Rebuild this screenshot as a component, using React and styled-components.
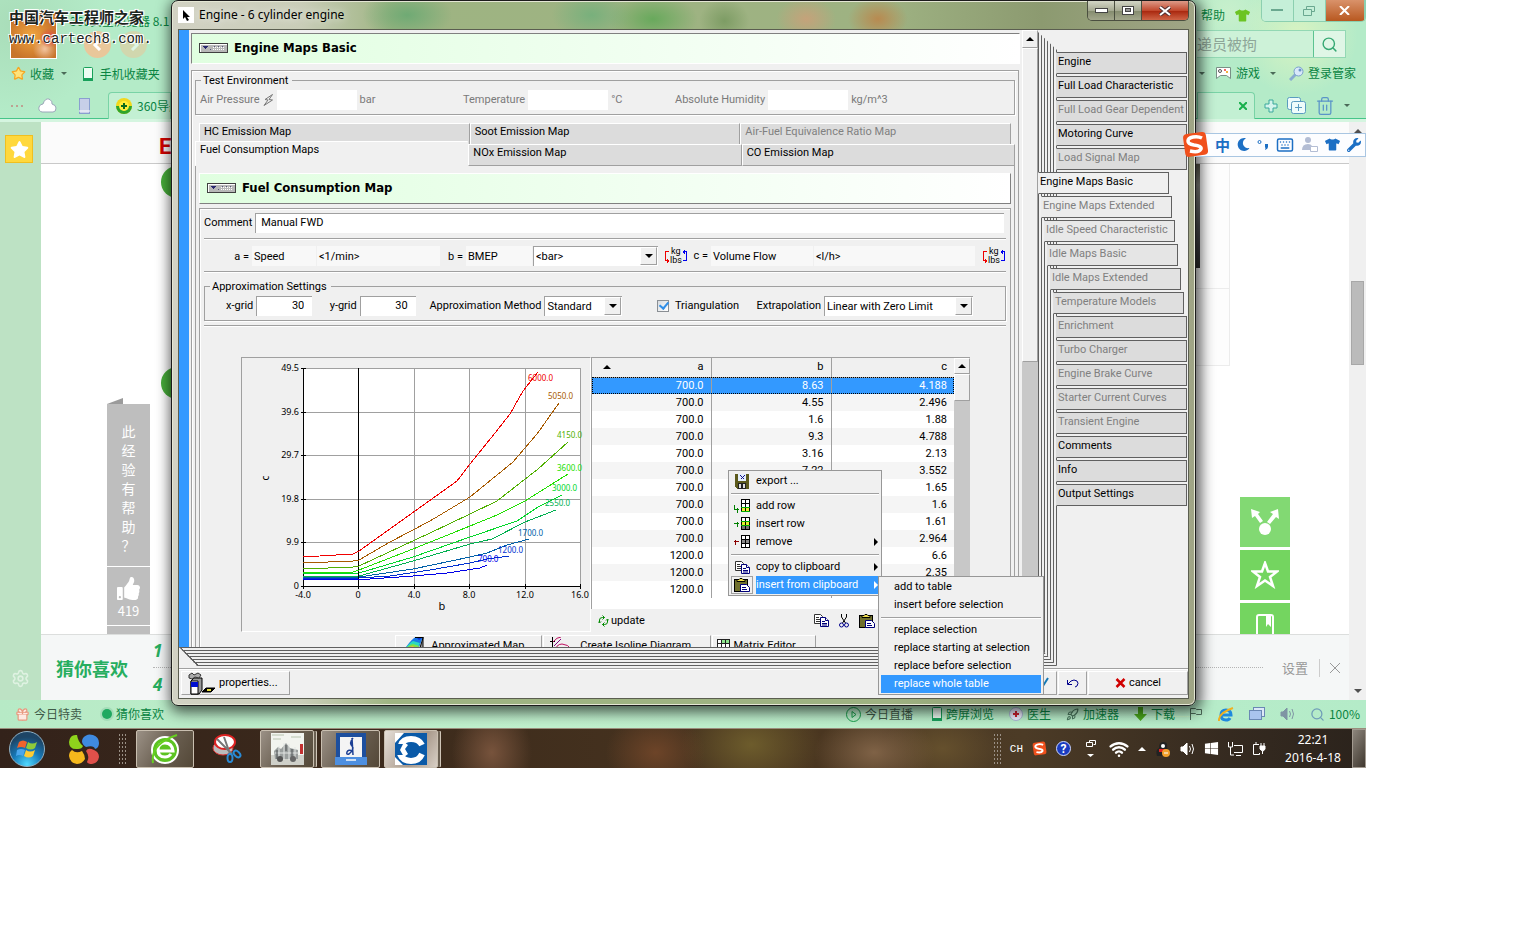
// libraries
import React from "react";
import styled, { createGlobalStyle, css } from "styled-components";
// icons
import { FaStar, FaWrench, FaTshirt, FaThumbsUp, FaWindows, FaMoon } from "react-icons/fa";
import { Wifi, Trash2, Settings, Search, Star, Rocket, Gift, Keyboard } from "lucide-react";

const GlobalStyle = createGlobalStyle`
  * {
    box-sizing: border-box;
  }

  body {
    margin: 0;
    background: #fff;
    font-family: Roboto, "Noto Sans CJK SC", sans-serif;
    font-size: 11px;
    line-height: 14px;
    color: #000;
  }

  button, input, select {
    font: inherit;
    color: inherit;
    margin: 0;
    padding: 0;
    border: 0;
    border-radius: 0;
    background: none;
  }

  a {
    color: inherit;
    text-decoration: none;
  }
`;

const cjk = css`
  font-family: "Noto Sans CJK SC", sans-serif;
  font-size: 12px;
  line-height: 16px;
`;

const raised = css`
  border: 1px solid;
  border-color: #fff #a0a0a0 #a0a0a0 #fff;
  background: #f0f0f0;
`;

/* ---------- desktop ---------- */

const Desktop = styled.main`
  position: relative;
  display: flex;
  flex-direction: column;
  max-width: 1366px;
  min-height: 768px;
  overflow: hidden;
`;

const Row = styled.div`
  display: flex;
  align-items: center;
  gap: ${(p) => p.$gap || 0}px;
  height: ${(p) => (p.$height ? `${p.$height}px` : "auto")};
  padding: ${(p) => p.$pad || 0};
`;

/* ---------- browser behind the window ---------- */

const BrowserHead = styled.header`
  ${cjk}
  display: flex;
  justify-content: space-between;
  height: 122px;
  color: #0a8442;
  background:
    radial-gradient(circle at 95% 30%, #d9f3c2 0, transparent 60px),
    radial-gradient(circle at 90% 10%, #c8f0cc 0, transparent 50px),
    radial-gradient(circle at 1% 20%, #a9ddb9 0, transparent 90px),
    #b4ebc8;
  border-bottom: 3px solid #d5f5e0;
  box-shadow: inset 0 -1px 0 #46c58a;
`;

const HeadLeft = styled.div`
  width: 171px;
`;

const HeadRight = styled.div`
  width: 169px;
`;

const Avatar = styled.div`
  width: 47px;
  height: 47px;
  border: 1px solid #fff;
  background:
    radial-gradient(circle at 85% 55%, #e04a4a 0, transparent 10px),
    radial-gradient(circle at 75% 80%, #f2c4a0 0, transparent 12px),
    radial-gradient(circle at 45% 50%, #f0a540 0, transparent 24px),
    #c8742a;
`;

const BrowserName = styled.div`
  height: 18px;
  margin-left: -14px;
  white-space: nowrap;
`;

const RoundNav = styled.button`
  display: grid;
  place-items: center;
  width: 27px;
  height: 27px;
  border-radius: 50%;
  background: #e9c79a;
  opacity: ${(p) => (p.$faded ? 0.55 : 1)};
`;

const BrowserTab = styled.div`
  display: flex;
  align-items: center;
  gap: 5px;
  height: 27px;
  flex: ${(p) => (p.$end ? "0 0 58px" : "1")};
  min-width: 0;
  overflow: hidden;
  white-space: nowrap;
  justify-content: ${(p) => (p.$end ? "flex-end" : "flex-start")};
  padding: 0 7px;
  border: 1px solid #79d3a6;
  border-bottom: 0;
  border-radius: ${(p) => (p.$end ? "0 4px 0 0" : "4px 0 0 0")};
  background: #c3f0d3;

  svg {
    flex: none;
  }
`;

const ChromeButtons = styled.div`
  display: flex;
  width: 105px;
  height: 22px;
  margin-left: auto;
  border: 1px solid #8ccfb0;
  border-top: 0;
  border-radius: 0 0 5px 5px;
  overflow: hidden;
`;

const ChromeButton = styled.button`
  display: grid;
  place-items: center;
  flex: ${(p) => (p.$close ? 5 : 4)};
  border-right: 1px solid #8ccfb0;
  background: ${(p) => (p.$close ? "linear-gradient(#d9926a, #b85820)" : "#c5efd8")};
`;

const SearchBox = styled.div`
  display: flex;
  height: 28px;
  width: 149px;
  border: 1px solid #93d8b4;
  border-left: 0;
  background: #cdf2d8;
`;

const SearchInput = styled.input`
  flex: 1;
  min-width: 0;
  font-size: 15px;
  color: #8ea698;
`;

const SearchButton = styled.button`
  display: grid;
  place-items: center;
  width: 32px;
  border-left: 1px solid #5cc391;
  background: #dff6e6;
`;

const Caret = styled.span`
  width: 0;
  height: 0;
  border: 3px solid transparent;
  border-top-color: #4b6a58;
  border-bottom: 0;
`;

const BrowserBody = styled.section`
  display: flex;
  flex: 1;
  min-height: 0;
`;

const Rail = styled.aside`
  display: flex;
  flex-direction: column;
  align-items: center;
  justify-content: space-between;
  width: 41px;
  padding: 13px 0 12px;
  background: #bde2c4;
`;

const RailStar = styled.button`
  display: grid;
  place-items: center;
  width: 28px;
  height: 28px;
  margin-right: 3px;
  border: 1px solid #f0bf20;
  background: #ffd83d;
`;

const WebPage = styled.div`
  display: flex;
  flex-direction: column;
  flex: 1;
  min-width: 0;
  background: #fff;
`;

const PageStrip = styled.div`
  height: 42px;
  padding: 12px 118px;
  border-bottom: 1px solid #c9c9c9;
  background: #fbfbfb;
`;

const RedMark = styled.b`
  font-size: 22px;
  line-height: 26px;
  color: #d40000;
`;

const PageBody = styled.div`
  display: flex;
  flex: 1;
  min-height: 0;
  padding: 0 59px 0 66px;
`;

const HelpFlag = styled.div`
  ${cjk}
  display: flex;
  flex-direction: column;
  align-self: flex-end;
  width: 43px;
  color: #fff;
  text-align: center;

  &::before {
    content: "";
    width: 16px;
    height: 6px;
    background: #9b9b9b;
    clip-path: polygon(0 100%, 100% 0, 100% 100%);
  }
`;

const HelpText = styled.p`
  display: flex;
  flex-direction: column;
  margin: 0;
  padding: 18px 0 11px;
  font-size: 14px;
  line-height: 19px;
  background: #bebebe;
`;

const HelpVote = styled.button`
  display: flex;
  flex-direction: column;
  align-items: center;
  gap: 3px;
  height: 60px;
  padding: 10px 0 0;
  font-size: 13px;
  color: #fff;
  border-top: 1px solid #fff;
  border-bottom: 1px solid #fff;
  background: #bebebe;
`;

const HelpEnd = styled.div`
  height: 8px;
  background: #bebebe;
`;

const GreenDots = styled.div`
  display: flex;
  flex-direction: column;
  gap: 169px;
  padding: 2px 0 0 11px;
`;

const GreenDot = styled.i`
  width: 32px;
  height: 32px;
  border-radius: 50%;
  background: #47ad3a;
`;

const ArticleSide = styled.div`
  width: 60px;
  height: 202px;
  margin-left: auto;
  border: 1px solid #ececec;
  border-top: 0;
  background: linear-gradient(#ececec, #ececec) 0 124px / 100% 1px no-repeat #fdfdfd;
`;

const ArticlePhoto = styled.div`
  width: 29px;
  height: 104px;
  background: linear-gradient(#5c5b4c, #8d8d88 20%, #55565a 60%, #2f2f31);
`;

const ShareColumn = styled.div`
  display: flex;
  flex-direction: column;
  gap: 3px;
  align-self: flex-end;
  height: 137px;
  margin-left: 10px;
  overflow: hidden;
`;

const ShareButton = styled.button`
  display: grid;
  place-items: center;
  flex: 0 0 50px;
  width: 50px;
  background: ${(p) => (p.$light ? "#82d973" : "#74d560")};
`;

const Suggest = styled.div`
  ${cjk}
  display: flex;
  align-items: center;
  height: 66px;
  padding: 0 3px 0 15px;
  border-top: 1px solid #dcdedd;
  background: #f5f7f7;
  color: #999;
`;

const SuggestTitle = styled.h2`
  margin: 0;
  width: 97px;
  font-size: 18px;
  line-height: 24px;
  color: #27ae60;
`;

const SuggestRanks = styled.div`
  display: flex;
  flex-direction: column;
  width: 40px;
  font: italic bold 17px/33px "Open Sans", sans-serif;
  color: #27ae60;

  span + span {
    border-top: 1px dotted #b5b5b5;
  }
`;

const Dots = styled.i`
  width: 90px;
  margin-left: auto;
  margin-right: 19px;
  border-top: 1px dotted #b5b5b5;
`;

const SettingsLink = styled.a`
  font-size: 13px;
`;

const PageScroll = styled.div`
  display: flex;
  flex-direction: column;
  align-items: center;
  width: 17px;
  padding: 7px 0;
  background: #f0f0f0;
`;

const PageThumb = styled.div`
  width: 13px;
  height: 84px;
  margin: 148px 0 auto;
  border: 1px solid #a8a8a8;
  background: #bbb;
`;

const BrowserStatus = styled.footer`
  ${cjk}
  display: flex;
  align-items: center;
  justify-content: space-between;
  height: 28px;
  padding: 0 6px 0 15px;
  color: #0a8442;
  background:
    radial-gradient(ellipse at 86% 60%, #d2f3bc 0, transparent 40px),
    linear-gradient(90deg, #b7eac6, #c0f0cd 40%, #b4ebc8);
`;

const StatusLink = styled.a`
  display: flex;
  align-items: center;
  gap: 4px;
  color: ${(p) => (p.$dark ? "#3f5a48" : "#0a8442")};
  margin-left: ${(p) => p.$before || 0}px;
`;

const LiveDot = styled.i`
  width: 10px;
  height: 10px;
  border-radius: 50%;
  background: #20a860;
  box-shadow: 0 0 0 2px #a4dcb8;
`;

/* ---------- taskbar ---------- */

const Taskbar = styled.footer`
  display: flex;
  align-items: center;
  height: 40px;
  color: #fff;
  border-top: 1px solid #9a8d7c;
  background:
    radial-gradient(ellipse 40px 50px at 36% 60%, #77533c, transparent),
    radial-gradient(ellipse 50px 40px at 48% 60%, #6d4428, transparent),
    radial-gradient(ellipse 70px 50px at 55% 40%, #6d5c2c, transparent),
    radial-gradient(ellipse 60px 40px at 64% 60%, #7f6246, transparent),
    radial-gradient(ellipse 60px 40px at 69% 50%, #65502d, transparent),
    linear-gradient(90deg, #33221a, #3d2b1c 30%, #4a3620 60%, #4c3b26 75%, #352a20 90%, #2b231c);
`;

const Orb = styled.button`
  display: grid;
  place-items: center;
  width: 36px;
  height: 36px;
  margin: 0 24px 0 9px;
  border-radius: 50%;
  border: 1px solid #8fb0c4;
  background: radial-gradient(circle at 50% 95%, #4fd8ff 0, #1679b8 40%, #1d4566 75%);
`;

const Grip = styled.i`
  width: 8px;
  height: 32px;
  margin-left: ${(p) => p.$before || 0}px;
  background: radial-gradient(circle, #9a9086 0 1px, transparent 1px) 0 0 / 3px 4px;
`;

const TaskButton = styled.button`
  display: grid;
  place-items: center;
  width: ${(p) => p.$width || 58}px;
  height: 38px;
  margin-left: ${(p) => p.$before || 0}px;
  border: ${(p) => (p.$bare ? 0 : "1px solid #c9bfb0")};
  border-radius: 2px;
  background: ${(p) =>
    p.$bare
      ? "none"
      : p.$active
        ? "linear-gradient(120deg, #e6dfd8, #a99a8c 60%, #d8cfc5)"
        : "linear-gradient(120deg, #9b9186, #6b6052 50%, #544838)"};
  box-shadow: ${(p) => (p.$stacked ? "3px 0 0 -1px #6b6052, 4px 0 0 -1px #d0c6b8" : "none")};
`;

const Tray = styled.div`
  display: flex;
  align-items: center;
  gap: 9px;
  margin-left: auto;
`;

const TrayLang = styled.span`
  font-family: "Liberation Mono", monospace;
  font-size: 11px;
`;

const Clock = styled.time`
  width: 68px;
  padding-left: 8px;
  font-family: "Noto Sans", sans-serif;
  font-size: 12px;
  line-height: 18px;
  text-align: center;
`;

const ShowDesktop = styled.button`
  width: 14px;
  height: 39px;
  border: 1px solid #a29a90;
  background: linear-gradient(120deg, #8c857c, #40382f);
`;

/* ---------- engine window ---------- */

const Window = styled.section`
  position: absolute;
  top: 0;
  left: 171px;
  right: 170px;
  bottom: 62px;
  display: flex;
  flex-direction: column;
  padding: 0 6px 6px;
  border: 1px solid #1c1c1c;
  border-radius: 7px;
  background:
    radial-gradient(ellipse 45px 25px at 23% 14px, #6faa74, transparent),
    radial-gradient(ellipse 40px 25px at 41% 14px, #78b07c, transparent),
    radial-gradient(ellipse 45px 25px at 47% 18px, #68a95c, transparent),
    radial-gradient(ellipse 25px 22px at 54% 20px, #7d9c64, transparent),
    radial-gradient(ellipse 30px 22px at 62% 18px, #c5a27a, transparent),
    radial-gradient(ellipse 30px 22px at 69% 18px, #b88a50, transparent),
    linear-gradient(90deg, #d2d2c4 0, #c9cdb8 130px, #9eb482 220px, #9eb282 70%, #8c9a70 85%, #a0a586);
  box-shadow: inset 0 0 0 1px #e4e6d4, 2px 3px 14px 3px rgba(0, 0, 0, 0.65);
`;

const TitleBar = styled.header`
  display: flex;
  align-items: flex-start;
  height: 28px;
`;

const TitleIcon = styled.span`
  display: grid;
  place-items: center;
  width: 16px;
  height: 16px;
  margin-top: 6px;
  background: #fff;
`;

const WindowTitle = styled.h1`
  margin: 5px 0 0 5px;
  font-family: "Noto Sans", sans-serif;
  font-size: 12px;
  font-weight: 400;
  line-height: 18px;
  text-shadow: 0 0 8px #fff;
`;

const CaptionButtons = styled.div`
  display: flex;
  height: 20px;
  margin-left: auto;
  border: 1px solid #4b4f40;
  border-top: 0;
  border-radius: 0 0 5px 5px;
  overflow: hidden;
`;

const CaptionButton = styled.button`
  display: grid;
  place-items: center;
  width: ${(p) => (p.$close ? 46 : 27)}px;
  border-right: ${(p) => (p.$close ? 0 : "1px solid #4b4f40")};
  background: ${(p) =>
    p.$close
      ? "linear-gradient(#dd9a88, #c2492e 50%, #a8260d 52%, #cf6446)"
      : "linear-gradient(#d3d6c6, #a6aa92 50%, #848b6e 52%, #a3a78c)"};
`;

const Client = styled.div`
  display: grid;
  flex: 1;
  min-height: 0;
  grid-template-columns: minmax(0, 1fr) 19px 131px;
  grid-template-rows: minmax(0, 1fr) 19px 32px;
  border: 1px solid #5b5e50;
  background: #f0f0f0;
`;

const Sheet = styled.div`
  grid-area: 1 / 1;
  display: flex;
  overflow: hidden;
`;

const BlueStrip = styled.i`
  width: 10px;
  background: #3399ff;
`;

const SheetBody = styled.div`
  flex: 1;
  min-width: 0;
  padding: 3px 2px 0;
`;

const SheetEdgesRight = styled.i`
  grid-area: 1 / 2 / 3 / 3;
  background: repeating-linear-gradient(90deg, #606060 0 1px, #f0f0f0 1px 3px);
  clip-path: polygon(0 2px, 100% 20px, 100% 100%, 0 calc(100% - 18px));
`;

const SheetEdgesBottom = styled.i`
  grid-area: 2 / 1 / 3 / 3;
  background:
    linear-gradient(45deg, transparent 49%, #606060 49% 53%, transparent 53%) 0 0 / 19px 19px no-repeat,
    repeating-linear-gradient(#606060 0 1px, #f0f0f0 1px 3px);
  clip-path: polygon(0 0, calc(100% - 18px) 0, 100% 100%, 18px 100%);
`;

const ScrollColumn = styled.div`
  display: flex;
  flex-direction: column;
  width: 16px;
  background: #c8c8c8;
`;

const ScrollUp = styled.button`
  display: grid;
  place-items: center;
  height: ${(p) => p.$height}px;
  ${raised}
`;

const ScrollThumb = styled.div`
  height: ${(p) => p.$height}px;
  ${raised}
`;

const Heading = styled.h2`
  display: flex;
  align-items: center;
  gap: 6px;
  height: 31px;
  margin: 0;
  padding: 0 0 2px 7px;
  font-family: "DejaVu Sans Condensed", "Open Sans", sans-serif;
  font-size: 13px;
  line-height: 18px;
  font-weight: 700;
  border: 1px solid;
  border-color: ${(p) => (p.$sunken ? "#808080 #fff #fff #808080" : "#fff #808080 #808080 #fff")};
  background: linear-gradient(90deg, #e0ffe0, #fff);
`;

const Pane = styled.div`
  height: 800px;
  margin-top: 6px;
  padding: 3px 3px 0;
  margin-right: 1px;
  border: 1px solid #a0a0a0;
  box-shadow: inset 1px 1px 0 #fff;
`;

const Group = styled.fieldset`
  min-width: 0;
  margin: 0;
  padding: 3px 4px 4px;
  border: 1px solid #a0a0a0;
  box-shadow: 1px 1px 0 #fff;
`;

const GroupTitle = styled.legend`
  margin-left: 1px;
  padding: 0 4px 0 2px;
  line-height: 13px;
`;

const EnvFields = styled.div`
  display: grid;
  grid-template-columns: 263px 212px 1fr;
  height: 20px;
  color: #7a7a7a;
`;

const Labelled = styled.label`
  display: flex;
  align-items: center;
  gap: 3px;
`;

const CommentField = styled(Labelled)`
  padding-right: 2px;
`;

const TextBox = styled.input`
  width: ${(p) => (p.$width ? `${p.$width}px` : "auto")};
  flex: ${(p) => (p.$width ? "none" : 1)};
  min-width: 0;
  height: 20px;
  padding: 0 ${(p) => (p.$number ? 8 : 5)}px 2px;
  text-align: ${(p) => (p.$number ? "right" : "left")};
  background: #fff;
  border: solid #a0a0a0;
  border-width: ${(p) => (p.$flat ? 0 : "1px 0 0 1px")};
`;

const MapTabs = styled.nav`
  margin-top: 8px;
`;

const MapTabRow = styled.div`
  display: flex;
  align-items: flex-end;
  padding: 0 ${(p) => (p.$back ? 4 : 0)}px;
`;

const MapTab = styled.button`
  flex: 1;
  height: ${(p) => (p.$active ? 25 : 22)}px;
  margin-top: ${(p) => (p.$active ? -4 : 0)}px;
  padding: 0 4px ${(p) => (p.$active ? 8 : 4)}px;
  text-align: left;
  color: ${(p) => (p.$dim ? "#808080" : "#000")};
  border: 1px solid;
  border-color: ${(p) => (p.$active ? "#fff transparent transparent #fff" : "#fff #a0a0a0 #a0a0a0 #fff")};
  border-bottom-width: ${(p) => (p.$back ? 0 : 1)}px;
  background: ${(p) => (p.$active ? "#f0f0f0" : "#dcdcdc")};

  ${(p) => p.$back && "height: 21px;"}
`;

const MapPage = styled.div`
  height: 700px;
  padding: 7px 3px 0;
  border: solid;
  border-width: 0 1px;
  border-color: #fff #a0a0a0;
`;

const MapFrame = styled.div`
  height: 600px;
  margin-top: 4px;
  padding: 4px;
  border: 1px solid #a0a0a0;
  box-shadow: inset 1px 1px 0 #fff;
`;

const Rule = styled.hr`
  height: 2px;
  margin: ${(p) => p.$margin};
  border: 0;
  border-top: 1px solid #a0a0a0;
  border-bottom: 1px solid #fff;
`;

const AxisFields = styled.div`
  display: grid;
  grid-template-columns: 47px 64px 1fr 24px 66px 125px 51px 102px 161px 30px;
  column-gap: 1px;
  align-items: center;
  height: 20px;
`;

const AxisLabel = styled.span`
  text-align: right;
  padding: 1px 2px 0 0;
`;

const ReadOnly = styled.output`
  height: 20px;
  padding: 4px 2px 0;
  background: #f8f8f8;
`;

const UnitButton = styled.button`
  display: grid;
  place-items: center;
  justify-self: ${(p) => (p.$end ? "end" : "auto")};
  width: 24px;
  height: 20px;
`;

const UnitCell = styled.div`
  display: flex;
  align-items: center;
  justify-content: space-between;
  padding: 0 2px 0 5px;
`;

const SelectBox = styled.span`
  display: flex;
  width: ${(p) => (p.$width ? `${p.$width}px` : "auto")};
  height: 20px;
  padding-right: 1px;
  background: #fff;
  border: solid #a0a0a0;
  border-width: 1px 0 0 1px;
`;

const Select = styled.select`
  flex: 1;
  min-width: 0;
  padding: 0 2px;
  appearance: none;
`;

const SelectArrow = styled.i`
  display: grid;
  place-items: center;
  width: 17px;
  height: 18px;
  pointer-events: none;
  ${raised}
`;

const ApproxFields = styled.div`
  display: flex;
  align-items: center;
  height: 20px;
  padding: 0 28px 0 17px;
`;

const Spacer = styled.i`
  flex: ${(p) => p.$grow};
`;

const CheckBox = styled.input`
  appearance: none;
  width: 12px;
  height: 12px;
  border: 1px solid #8a8f94;
  background: linear-gradient(135deg, #d6dbe0, #fff);

  &:checked::before {
    content: "";
    display: block;
    width: 4px;
    height: 7px;
    margin: -1px 0 0 3px;
    border: solid #2f8ee8;
    border-width: 0 2px 2px 0;
    transform: rotate(40deg);
  }
`;

const DataArea = styled.div`
  display: grid;
  grid-template-columns: 350px 1fr;
  margin: 0 36px 0 37px;
`;

const ChartPane = styled.div`
  height: 275px;
  border: 1px solid;
  border-color: #a0a0a0 #fff #fff #a0a0a0;
`;

const TableColumn = styled.div`
  display: flex;
  flex-direction: column;
`;

const TableBox = styled.div`
  display: flex;
  height: 252px;
  background: #fff;
  border: solid #a0a0a0;
  border-width: 1px 0 0 1px;
`;

const TableWrap = styled.div`
  flex: 1;
`;

const Table = styled.table`
  width: 100%;
  table-layout: fixed;
  border-collapse: collapse;
`;

const HeadCell = styled.th`
  width: ${(p) => (p.$width ? `${p.$width}px` : "auto")};
  height: 19px;
  padding: 0 7px 0 11px;
  font-weight: 400;
  text-align: right;
  background: #f0f0f0;
  border: solid #a0a0a0;
  border-width: 0 ${(p) => (p.$width ? 1 : 0)}px 1px 0;
`;

const HeadInner = styled.span`
  display: flex;
  align-items: center;
  justify-content: space-between;
`;

const BodyRow = styled.tr`
  height: 17px;
  color: ${(p) => (p.$selected ? "#fff" : "#000")};
  background: ${(p) => (p.$selected ? "#3399ff" : p.$odd ? "#f5f5f5" : "#fff")};
  outline: ${(p) => (p.$selected ? "1px dotted #000" : "none")};
  outline-offset: -1px;
`;

const Cell = styled.td`
  padding: 0 7px 0 0;
  line-height: 15px;
  text-align: right;

  & + & {
    border-left: 1px solid #a0a0a0;
  }
`;

const TableTools = styled.div`
  display: flex;
  align-items: center;
  gap: 10px;
  height: 23px;
  padding: 0 95px 0 7px;
`;

const ToolButton = styled.button`
  display: flex;
  align-items: center;
  gap: 2px;
  margin-right: ${(p) => (p.$first ? "auto" : 0)};
`;

const ViewTabs = styled.nav`
  display: flex;
  justify-content: center;
  gap: 1px;
  margin-top: 3px;
`;

const ViewTab = styled.button`
  display: flex;
  align-items: center;
  gap: 4px;
  width: ${(p) => p.$width}px;
  height: 22px;
  padding: 0 4px 0 ${(p) => p.$indent || 4}px;
  ${raised}
`;

const PageTabs = styled.nav`
  grid-area: 1 / 3 / 3 / 4;
  position: relative;
  display: flex;
  flex-direction: column;
  gap: 2px;
  padding-top: 22px;
  margin-left: -1px;
`;

const PageTab = styled.button`
  flex: 0 0 22px;
  width: 131px;
  margin-left: ${(p) => -p.$shift}px;
  padding: 0 1px 2px;
  text-align: left;
  white-space: nowrap;
  color: ${(p) => (p.$dim ? "#808080" : "#000")};
  border: 1px solid #606060;
  border-left-color: ${(p) => p.$shade};
  background: ${(p) => p.$shade};
`;

const WindowFoot = styled.footer`
  grid-area: 3 / 1 / 4 / 4;
  display: flex;
  gap: 1px;
  height: 30px;
  margin-top: 2px;
  padding: 2px 0 3px 2px;
  border-top: 1px solid #a0a0a0;
  box-shadow: inset 0 1px 0 #fff;
`;

const FootButton = styled.button`
  display: flex;
  align-items: center;
  justify-content: ${(p) => (p.$left ? "flex-start" : "center")};
  gap: 3px;
  width: ${(p) => p.$width}px;
  padding: 0 6px;
  margin-right: ${(p) => (p.$left ? "auto" : 0)};
  ${raised}
`;

/* ---------- floating menus, ime bar, watermark ---------- */

const Menu = styled.div`
  position: absolute;
  left: ${(p) => p.$x}px;
  top: ${(p) => p.$y}px;
  width: ${(p) => p.$width}px;
  padding: 1px 2px;
  border: 1px solid #979797;
  background: #f0f0f0;
`;

const MenuItem = styled.button`
  display: flex;
  width: 100%;
  height: 18px;
  text-align: left;
`;

const MenuIcon = styled.span`
  display: grid;
  place-items: center;
  width: 22px;
  margin-right: 3px;
  outline: ${(p) => (p.$on ? "1px solid #a0a0a0" : "none")};
  outline-offset: -1px;
`;

const MenuText = styled.span`
  display: flex;
  align-items: center;
  justify-content: space-between;
  flex: 1;
  padding: 0 1px 0 ${(p) => (p.$indent ? 13 : 0)}px;
  color: ${(p) => (p.$on ? "#fff" : "#000")};
  background: ${(p) => (p.$on ? "#3399ff" : "none")};
`;

const ImeBar = styled.div`
  ${cjk}
  position: absolute;
  top: 131px;
  right: 0;
  display: flex;
  align-items: center;
  width: 184px;
  height: 27px;
`;

const ImeLogo = styled.span`
  display: flex;
  flex: none;
  z-index: 1;
`;

const ImeTools = styled.div`
  display: flex;
  align-items: center;
  justify-content: space-between;
  flex: 1;
  height: 24px;
  margin-left: -14px;
  padding: 0 4px 0 19px;
  font-size: 15px;
  font-weight: 700;
  color: #1c6fc4;
  border: 1px solid #a9c6e2;
  background: #fcfdff;
`;

const Watermark = styled.div`
  position: absolute;
  top: 6px;
  left: 9px;
  font-family: "Noto Sans CJK SC", sans-serif;
  font-size: 15px;
  font-weight: 700;
  line-height: 22px;
  color: #1c2420;
  text-shadow: 1px 1px 0 #fff, -1px -1px 0 #fff, 1px -1px 0 #fff;
`;

const WatermarkUrl = styled.div`
  font-family: "Liberation Mono", monospace;
  font-size: 14px;
  font-weight: 400;
`;

/* ---------- small drawings ---------- */

const Triangle = ({ dir = "down", color = "#000" }) => {
  const points = { down: "0,0 8,0 4,4", up: "0,4 8,4 4,0", right: "0,0 4,4 0,8" }[dir];
  const size = dir === "right" ? [4, 8] : [8, 4];
  return (
    <svg width={size[0]} height={size[1]} aria-hidden="true">
      <polygon points={points} fill={color} />
    </svg>
  );
};

const HandleIcon = () => (
  <svg width="29" height="10" shapeRendering="crispEdges" aria-hidden="true">
    <rect width="29" height="10" fill="#404040" />
    <rect x="1" y="1" width="27" height="8" fill="#fff" />
    <rect x="2" y="2" width="26" height="7" fill="#b8b8b8" />
    <path d="M4 3h5v1h-1v1h-1v1h-1v-1h-1v-1h-1z" fill="#28286e" />
    {[14, 16, 18, 20, 22, 24].map((x) => (
      <path key={x} d={`M${x} 4h1v1h-1zM${x} 6h1v1h-1z`} fill="#fff" />
    ))}
    <path d="M11 6h1v1h-1zM15 3h1v1h-1zM19 3h1v1h-1zM23 3h1v1h-1z" fill="#55557a" />
  </svg>
);

const UnitIcon = () => (
  <svg width="22" height="20" viewBox="0 -1 22 20" overflow="visible" aria-hidden="true">
    <g fill="none" shapeRendering="crispEdges">
      <path d="M4 4.500H.5v9H4M2.500 11.500v4M3.500 12.500v2" stroke="#e00" />
      <path d="M18 13.500h3.500v-9H18M19.500 2.500v4M18.500 3.500v2" stroke="#00e" />
    </g>
    <text x="6" y="7" fontSize="9">kg</text>
    <text x="5" y="16" fontSize="9">lbs</text>
  </svg>
);

const BoltIcon = () => (
  <svg width="11" height="12" aria-hidden="true">
    <path d="M9.500.5L2 5.500l3 .500L1 11.500 9.500 6l-3.500-.500z" fill="none" stroke="#777" />
  </svg>
);

const SaveIcon = () => (
  <svg width="14" height="15" shapeRendering="crispEdges" aria-hidden="true">
    <path d="M0 0h14v15H2L0 13z" fill="#5c5a1c" />
    <path d="M3 0h8v7H3z" fill="#e4eefc" />
    <path d="M3 9h8v6H3z" fill="#222" />
    <path d="M4 10h2v4H4zM8 10h2v4H8z" fill="#ddd" />
    <path d="M5 1h1v1h1v1h1V2h1V1h1v1H9v1H8v1h1v1H8V4H7v1H6V4h1V3H6V2H5z" fill="#118" />
  </svg>
);

const ROW_ICONS = {
  add: { color: "#008000", arrow: "M.5 6v4.500H5M3.500 8.500v5", middle: "#fff", last: "#f0f030" },
  insert: { color: "#008000", arrow: "M0 6.500h5M3.500 4.500v5", middle: "#e8f030", last: "#777" },
  remove: { color: "#8b0000", arrow: "M0 6.500h5M1.500 4.500v5", middle: "#888", last: "#fff" },
};

const RowIcon = ({ kind }) => {
  const { color, arrow, middle, last } = ROW_ICONS[kind];
  return (
    <svg width="17" height="14" shapeRendering="crispEdges" aria-hidden="true">
      <path d={arrow} fill="none" stroke={color} />
      <rect x="7" y="0" width="9" height="13" />
      <path d="M8 1h3v3H8zM12 1h3v3h-3z" fill="#fff" />
      <path d="M8 5h3v3H8zM12 5h3v3h-3z" fill={middle} />
      <path d="M8 9h3v3H8zM12 9h3v3h-3z" fill={last} />
      {kind === "add" && <path d="M7 8.500h9M7 12.500h9" stroke="#0a0" />}
      {kind === "insert" && <path d="M7 4.500h9M7 8.500h9" stroke="#0a0" />}
    </svg>
  );
};

const CopyIcon = () => (
  <svg width="15" height="13" aria-hidden="true">
    <g fill="#fff" stroke="#333">
      <path d="M.5.5h6l2 2v7h-8z" />
      <path d="M2 3.500h3M2 5.500h4M2 7.500h4" />
      <path d="M6.500 3.500h5l3 3v6h-8z" stroke="#00007a" />
      <path d="M11.500 3.500v3h3M8 7.500h3M8 9.500h5M8 11h5" stroke="#00007a" />
    </g>
  </svg>
);

const PasteIcon = () => (
  <svg width="16" height="14" aria-hidden="true">
    <rect x=".5" y="1.500" width="13" height="12" fill="#70702c" stroke="#000" />
    <path d="M3 3.500h8v-2H9L8 .5H6L5 1.500H3z" fill="#eedc4c" stroke="#000" />
    <path d="M6.500 6.500h6l3 3v4h-9z" fill="#fff" stroke="#00007a" />
    <path d="M8 9.500h4M8 11.500h5" stroke="#00007a" />
  </svg>
);

const CutIcon = () => (
  <svg width="10" height="14" aria-hidden="true" fill="none">
    <path d="M2.500 0v3l4 6M7.500 0v3l-4 6" stroke="#000" />
    <circle cx="2.500" cy="11" r="2" stroke="#00008b" />
    <circle cx="7.500" cy="11" r="2" stroke="#00008b" />
  </svg>
);

const UpdateIcon = () => (
  <svg width="11" height="12" aria-hidden="true" fill="none" stroke="#008a00">
    <path d="M1.500 7.500V5q0-2.500 3-2.500h2M4.500.5l2 2-2 2M0 6.500l1.500 1.500L3 6.500" />
    <path d="M9.500 4.500V7q0 2.500-3 2.500h-2M6.500 11.500l-2-2 2-2M8 5.500L9.500 4 11 5.500" />
  </svg>
);

const PropertiesIcon = () => (
  <svg width="28" height="23" aria-hidden="true">
    <path d="M3 9l3-3h8v12l-3 4H3z" fill="#999" stroke="#000" />
    <path d="M3 9h7v13H3z" fill="#fff" stroke="#000" />
    <path d="M3 10h7v5H3z" fill="#0010d0" />
    <path d="M1 3l3-2 2 2 4-2 3 2-2 3-4-1-3 2-3-1z" fill="#aaa" stroke="#333" />
    <path d="M14 20l4-4h9l-4 4z" stroke="#000" />
    <path d="M19 18h4" stroke="#e8e040" strokeWidth="2" />
  </svg>
);

const MapIcon = () => (
  <svg width="21" height="19" aria-hidden="true">
    <path d="M0 13Q8 1 12 0h7l-5 13z" fill="#1878e8" />
    <path d="M0 13Q6 5 9 4l7 2-3 7z" fill="#2ad8c0" />
    <path d="M0 13q6-6 9-6l6 2-2 4z" fill="#7ee048" />
    <path d="M1 13q5-4 8-4l4 4z" fill="#f2b040" />
    <path d="M12 0h7l-4 3z" fill="#1030d0" />
    <path d="M19 0v14h-4l4-13zM11 .5h8" fill="#999" stroke="#000" />
  </svg>
);

const IsolineIcon = () => (
  <svg width="24" height="19" fill="none" aria-hidden="true">
    <path d="M2.500 0v18M0 10.500h5M0 4.500h5" stroke="#000" />
    <path d="M3 5q4-5 8-5M4 16q2-9 8-9 6 0 10 6M8 17q1-6 5-6t6 6" stroke="#c01060" />
    <path d="M4 9l7-7" stroke="#800080" />
  </svg>
);

const MatrixIcon = () => (
  <svg width="13" height="14" shapeRendering="crispEdges" aria-hidden="true">
    <rect width="13" height="14" fill="#222" />
    {[1, 5, 9].map((x) =>
      [1, 5, 9].map((y) => <rect key={`${x}-${y}`} x={x} y={y} width="3" height="3" fill={y === 1 && x > 1 ? "#8fe88f" : "#fff"} />)
    )}
  </svg>
);

const UndoIcon = () => (
  <svg width="13" height="11" fill="none" stroke="#00008b" aria-hidden="true">
    <path d="M1.500 2v4.500H6M2 6l3-3q3-2 6 0 2 2 0 5l-2 1" />
  </svg>
);

const CrossIcon = () => (
  <svg width="11" height="10" stroke="#d00000" strokeWidth="2.500" aria-hidden="true">
    <path d="M1.500 1L9.500 9M9.500 1L1.500 9" />
  </svg>
);

const PhoneIcon = ({ color = "#18a05a" }) => (
  <svg width="10" height="14" aria-hidden="true">
    <rect x=".5" y=".5" width="9" height="13" rx="1" fill="#eefcf2" stroke={color} />
    <path d="M0 11h10v3H0z" fill={color} />
  </svg>
);

const SogouIcon = ({ size = 15 }) => (
  <svg width={size} height={size} viewBox="0 0 27 27" aria-hidden="true">
    <rect x="2" y="2" width="23" height="23" rx="4" fill="#f0501c" transform="rotate(-8 13 13)" />
    <path d="M20 7q-4-2-9-1-5 1-5 4t6 4q8 1 7 4-2 4-11 2" fill="none" stroke="#fff" strokeWidth="3.500" />
  </svg>
);

const SpeakerIcon = ({ color = "#fff" }) => (
  <svg width="15" height="14" fill="none" stroke={color} aria-hidden="true">
    <path d="M1 5h2l4-4v12L3 9H1z" fill={color} />
    <path d="M9.500 4q2 3 0 6M12 2q3 5 0 10" />
  </svg>
);

const CloverIcon = () => (
  <svg width="30" height="30" aria-hidden="true">
    <path d="M14 12Q9 8 8 1 1 0 0 8q0 8 9 7 4 0 5-3z" fill="#8fd41c" />
    <path d="M17 13q-6-4-3-9 4-5 10-3 6 2 6 8 0 5-4 6-1-4-9-2z" fill="#3f8ae0" />
    <path d="M13 17q3 4 3 8-3 5-8 5-7-1-8-8 0-4 3-6 4 4 10 1z" fill="#f6b81c" />
    <path d="M17 17q2-4 8-1 5 2 5 7-1 6-7 7-4 0-5-2 3-5-1-11z" fill="#e0504a" />
  </svg>
);

const BrowserE = () => (
  <svg width="30" height="30" aria-hidden="true">
    <circle cx="15" cy="16" r="13" fill="#5cc322" stroke="#fff" strokeWidth="2" />
    <path d="M8 17h15q-1-8-8-8t-7 7q0 7 7 7 4 0 6-3" fill="none" stroke="#fff" strokeWidth="3" />
    <path d="M3 29Q0 10 27 1" fill="none" stroke="#66d01f" strokeWidth="2" />
  </svg>
);

const SnipIcon = () => (
  <svg width="30" height="30" fill="none" aria-hidden="true">
    <ellipse cx="11" cy="14" rx="10" ry="7" fill="#bbb" stroke="#d33" />
    <ellipse cx="13" cy="8" rx="10" ry="7" fill="#fff" stroke="#d22" strokeWidth="2" />
    <path d="M5 5l15 15M12 3l6 17" stroke="#777" strokeWidth="2" />
    <ellipse cx="18" cy="24" rx="2.500" ry="4" stroke="#2a8ad4" strokeWidth="2" />
    <ellipse cx="25" cy="20" rx="4" ry="2.500" stroke="#2a8ad4" strokeWidth="2" transform="rotate(45 25 20)" />
  </svg>
);

const PhotoIcon = () => (
  <svg width="33" height="32" aria-hidden="true">
    <rect width="33" height="32" fill="#f2f4ef" />
    <path d="M0 22h33v10H0z" fill="#cfd0c9" />
    <path d="M1 2h12M2 6h8M20 4h10" stroke="#d5dccf" strokeWidth="2" />
    <path d="M3 18l4-4 3 2 5-6 4 5 8 2v9H4z" fill="#9a9f9e" />
    <path d="M8 13v14M13 10v17M18 11v16M24 14v12M4 20h24" stroke="#e3e6e4" />
    <path d="M6 17v9M15 12v6M21 16v9" stroke="#4e5354" />
    <circle cx="9" cy="26" r="3" fill="#555" />
    <circle cx="22" cy="26" r="3" fill="#666" />
    <path d="M29 11h3v10h-3z" fill="#c43030" />
  </svg>
);

const MusicIcon = () => (
  <svg width="32" height="32" aria-hidden="true">
    <rect x="1" y="0" width="30" height="28" fill="#1d4f9e" />
    <rect x="5" y="4" width="22" height="20" fill="#f4f4f4" />
    <path d="M18 5q-4 5-1 8t-3 8q-3 1-2-2t6-1M17 5l1 17" fill="none" stroke="#1c3f94" strokeWidth="1.500" />
    <path d="M0 24h32v8H0z" fill="#4d8fe0" />
    <path d="M11 26h10v2H11z" fill="#cfe0f4" />
  </svg>
);

const BlueCIcon = () => (
  <svg width="32" height="32" aria-hidden="true">
    <rect width="32" height="32" fill="#0a5aa8" />
    <path d="M0 0h9L0 10zM0 24l8 8H0z" fill="#fff" />
    <path d="M27 12Q24 6 16 6 8 6 6 12M27 21q-3 7-11 7-8 0-11-7" fill="none" stroke="#fff" strokeWidth="6" />
    <path d="M3 11h7v11H3z" fill="#0a5aa8" />
    <path d="M9 9l4 3-3 4 3 5-4 3-4-7z" fill="#fff" />
  </svg>
);

const WinFlag = () => (
  <svg width="22" height="20" aria-hidden="true">
    <path d="M3 3q4-3 8 0L9 9Q5 7 1 9z" fill="#f0642c" />
    <path d="M12 3q4 3 9 0l-2 6q-4 3-9 0z" fill="#8ecb3a" />
    <path d="M1 11q4-2 8 0l-2 6q-4-2-7 0z" fill="#4aa6ec" />
    <path d="M10 11q4 3 9 0l-2 6q-4 3-9 0z" fill="#fccb34" />
  </svg>
);

/* ---------- chart ---------- */

const CURVES = [
  { label: "6000.0", color: "#f00000", at: [287, 24], points: "62,200 112,197 118,194 216,124 229,107 254,76 269,57 282,34 297,15" },
  { label: "5050.0", color: "#a85a00", at: [307, 42], points: "62,206 112,204 118,203 149,185 189,164 229,140 272,105 296,77 318,46" },
  { label: "4150.0", color: "#50b000", at: [316, 81], points: "62,212 112,210 118,209 189,176 229,157 256,144 297,112 327,85" },
  { label: "3600.0", color: "#20e000", at: [316, 114], points: "62,215 112,215 118,213 172,192 229,169 256,158 284,144 327,117" },
  { label: "3000.0", color: "#00d828", at: [311, 134], points: "62,217 118,216 172,200 229,180 276,164 297,150 321,138" },
  { label: "2550.0", color: "#00b050", at: [304, 149], points: "62,220 118,219 172,204 229,187 251,182 284,165 315,153" },
  { label: "1700.0", color: "#0060a8", at: [277, 179], points: "62,221 118,220 172,212 229,200 246,196 266,188 288,182" },
  { label: "1200.0", color: "#0030d0", at: [257, 196], points: "62,222 118,221 149,219 189,213 229,206 246,202 268,199" },
  { label: "700.0", color: "#0000e8", at: [237, 205], points: "62,222 129,222 172,219 206,216 239,211 246,208" },
];

const X_TICKS = [[62, "-4.0"], [117, "0"], [173, "4.0"], [228, "8.0"], [284, "12.0"], [339, "16.0"]];
const Y_TICKS = [[11, "49.5"], [55, "39.6"], [98, "29.7"], [142, "19.8"], [185, "9.9"], [229, "0"]];

const Chart = () => (
  <svg width="348" height="273" viewBox="1 1 348 273" role="img" aria-label="Fuel consumption curves" fontFamily="Noto Sans, sans-serif">
    <rect x="62" y="11" width="277" height="218" fill="#fff" />
    <g shapeRendering="crispEdges">
      {X_TICKS.map(([x]) => <path key={x} d={`M${x + 0.5} 11v219`} stroke="#a0a0a0" />)}
      {Y_TICKS.map(([y]) => <path key={y} d={`M62 ${y + 0.5}h278`} stroke="#a0a0a0" />)}
      {X_TICKS.map(([x]) => <path key={x} d={`M${x + 0.5} 227v5`} stroke="#000" />)}
      {Y_TICKS.map(([y]) => <path key={y} d={`M60 ${y + 0.5}h5`} stroke="#000" />)}
      <path d="M62.500 11v219M117.500 11v219M60 229.500h280" stroke="#000" />
      {CURVES.map((c) => (
        <polyline key={c.label} points={c.points} fill="none" stroke={c.color} />
      ))}
    </g>
    <g fontSize="8">
      {CURVES.map((c) => (
        <text key={c.label} x={c.at[0]} y={c.at[1]} fill={c.color}>{c.label}</text>
      ))}
    </g>
    <g fontSize="9">
      {X_TICKS.map(([x, t]) => <text key={t} x={x} y="241" textAnchor="middle">{t}</text>)}
      {Y_TICKS.map(([y, t]) => <text key={t} x="58" y={y + 3} textAnchor="end">{t}</text>)}
    </g>
    <text x="201" y="253" fontSize="11" textAnchor="middle">b</text>
    <text x="26" y="123" fontSize="10" textAnchor="middle" transform="rotate(-90 26 121)">c</text>
  </svg>
);

/* ---------- data ---------- */

const ROWS = [
  ["700.0", "8.63", "4.188"],
  ["700.0", "4.55", "2.496"],
  ["700.0", "1.6", "1.88"],
  ["700.0", "9.3", "4.788"],
  ["700.0", "3.16", "2.13"],
  ["700.0", "7.22", "3.552"],
  ["700.0", "", "1.65"],
  ["700.0", "", "1.6"],
  ["700.0", "", "1.61"],
  ["700.0", "", "2.964"],
  ["1200.0", "", "6.6"],
  ["1200.0", "", "2.35"],
  ["1200.0", "", ""],
];

const PAGE_TABS = [
  { text: "Engine" },
  { text: "Full Load Characteristic" },
  { text: "Full Load Gear Dependent", dim: true },
  { text: "Motoring Curve" },
  { text: "Load Signal Map", dim: true },
  { text: "Engine Maps Basic", shift: 18, shade: "#f0f0f0" },
  { text: "Engine Maps Extended", dim: true, shift: 15, shade: "#ececec" },
  { text: "Idle Speed Characteristic", dim: true, shift: 12, shade: "#e8e8e8" },
  { text: "Idle Maps Basic", dim: true, shift: 9, shade: "#e5e5e5" },
  { text: "Idle Maps Extended", dim: true, shift: 6, shade: "#e2e2e2" },
  { text: "Temperature Models", dim: true, shift: 3, shade: "#dfdfdf" },
  { text: "Enrichment", dim: true },
  { text: "Turbo Charger", dim: true },
  { text: "Engine Brake Curve", dim: true },
  { text: "Starter Current Curves", dim: true },
  { text: "Transient Engine", dim: true },
  { text: "Comments" },
  { text: "Info" },
  { text: "Output Settings" },
];

const MENU = [
  { text: "export ...", icon: <SaveIcon /> },
  null,
  { text: "add row", icon: <RowIcon kind="add" /> },
  { text: "insert row", icon: <RowIcon kind="insert" /> },
  { text: "remove", icon: <RowIcon kind="remove" />, more: true },
  null,
  { text: "copy to clipboard", icon: <CopyIcon />, more: true },
  { text: "insert from clipboard", icon: <PasteIcon />, more: true, on: true },
];

const SUBMENU = [
  { text: "add to table" },
  { text: "insert before selection" },
  null,
  { text: "replace selection" },
  { text: "replace starting at selection" },
  { text: "replace before selection" },
  { text: "replace whole table", on: true },
];

/* ---------- parts ---------- */

const DropDown = ({ id, value, width, label }) => (
  <SelectBox $width={width}>
    <Select id={id} defaultValue={value} aria-label={label}>
      <option>{value}</option>
    </Select>
    <SelectArrow><Triangle /></SelectArrow>
  </SelectBox>
);

const PopupMenu = ({ items, x, y, width, label }) => (
  <Menu role="menu" aria-label={label} $x={x} $y={y} $width={width}>
    {items.map((item, i) =>
      item ? (
        <MenuItem key={item.text} role="menuitem">
          {item.icon && <MenuIcon $on={item.on}>{item.icon}</MenuIcon>}
          <MenuText $on={item.on} $indent={!item.icon}>
            {item.text}
            {item.more && <Triangle dir="right" color={item.on ? "#fff" : "#000"} />}
          </MenuText>
        </MenuItem>
      ) : (
        <Rule key={i} $margin="3px 0 2px" />
      )
    )}
  </Menu>
);

const BrowserHeader = () => (
  <BrowserHead>
    <HeadLeft>
      <Row $height={59} $gap={27} $pad="12px 0 0 10px">
        <Avatar />
        <div>
          <BrowserName>360安全浏览器 8.1</BrowserName>
          <Row $gap={9}>
            <RoundNav aria-label="Back"><svg width="12" height="12" fill="none" stroke="#fff" strokeWidth="3"><path d="M8 1L3 6l5 5" /></svg></RoundNav>
            <RoundNav $faded aria-label="Forward"><svg width="12" height="12" fill="none" stroke="#fff" strokeWidth="3"><path d="M4 1l5 5-5 5" /></svg></RoundNav>
          </Row>
        </div>
      </Row>
      <Row $height={29} $gap={7} $pad="0 0 0 11px">
        <StatusLink href="#fav">
          <Star size={15} color="#f5a623" fill="#ffe27a" />收藏
        </StatusLink>
        <Caret />
        <StatusLink $before={9} href="#phone"><PhoneIcon />&nbsp;手机收藏夹</StatusLink>
      </Row>
      <Row $height={31} $gap={18} $pad="4px 0 0 10px">
        <svg width="14" height="4" fill="#c08a80" aria-hidden="true"><circle cx="2" cy="2" r="1" /><circle cx="7" cy="2" r="1" /><circle cx="12" cy="2" r="1" /></svg>
        <svg width="19" height="15" aria-hidden="true" overflow="visible"><path d="M0 14q-4-1-3-5 1-3 4-3 2-6 6-5 4 2 3 5 4 1 4 4 0 4-3 4z" fill="#fff" stroke="#9aa6b8" /></svg>
        <svg width="11" height="16" aria-hidden="true"><rect x=".5" y=".5" width="10" height="15" fill="#c7cfe8" stroke="#8a9fd0" /><path d="M0 13h11" stroke="#fff" /></svg>
        <BrowserTab>
          <svg width="16" height="16" aria-hidden="true"><circle cx="8" cy="8" r="8" fill="#f3d81c" /><path d="M0 8a8 8 0 0016 0z" fill="#2fa52c" /><circle cx="8" cy="8" r="5" fill="#ffee3a" /><path d="M8 5v6M5 8h6" stroke="#0c6b1c" strokeWidth="2" /></svg>
          <span>360导航</span>
        </BrowserTab>
      </Row>
    </HeadLeft>
    <HeadRight>
      <Row $height={30} $gap={10} $pad="0 0 0 4px">
        <span>帮助</span>
        <FaTshirt size={15} color="#6cc423" />
        <Row $height={30} style={{ marginLeft: "auto", alignItems: "flex-start" }}>
          <ChromeButtons>
            <ChromeButton aria-label="Minimise browser"><svg width="12" height="3"><path d="M0 1h12" stroke="#6aa890" strokeWidth="2" /></svg></ChromeButton>
            <ChromeButton aria-label="Restore browser"><svg width="12" height="10" fill="none" stroke="#6aa890"><path d="M3.500 3V.5h8v5H9M.5 3.500h8v6h-8z" /></svg></ChromeButton>
            <ChromeButton $close aria-label="Close browser"><svg width="11" height="9" stroke="#fff" strokeWidth="2"><path d="M1 0l9 9M10 0L1 9" /></svg></ChromeButton>
          </ChromeButtons>
        </Row>
      </Row>
      <SearchBox>
        <SearchInput aria-label="Search" defaultValue="递员被拘" />
        <SearchButton aria-label="Go"><Search size={17} color="#35a873" /></SearchButton>
      </SearchBox>
      <Row $height={30} $gap={10} $pad="0 0 0 2px">
        <Caret />
        <StatusLink href="#games">
          <svg width="17" height="14" aria-hidden="true"><path d="M1.500 1.500h14v11l-4-3h-6l-4 3z" fill="#fff" stroke="#7a8f86" /><circle cx="5" cy="5" r="1.500" fill="none" stroke="#555" /><circle cx="10" cy="4" r="1" fill="#e33" /><circle cx="12" cy="6" r="1" fill="#e90" /></svg>
          游戏
        </StatusLink>
        <Caret />
        <StatusLink $before={3} href="#login">
          <svg width="15" height="15" aria-hidden="true"><path d="M1 14l6-6" stroke="#88acd0" strokeWidth="3" /><circle cx="9.500" cy="5.500" r="4.500" fill="#d8e8fa" stroke="#78a0cc" /><circle cx="11" cy="4" r="1.500" fill="#6a94c8" /></svg>
          登录管家
        </StatusLink>
      </Row>
      <Row $height={31} $gap={9} $pad="4px 0 0">
        <BrowserTab $end>
          <svg width="8" height="8" stroke="#18b04c" strokeWidth="2"><path d="M0 0l8 8M8 0L0 8" /></svg>
        </BrowserTab>
        <svg width="14" height="14" aria-hidden="true"><path d="M5 1h4v4h4v4H9v4H5V9H1V5h4z" fill="#d4f4ec" stroke="#3aa89c" /></svg>
        <svg width="19" height="17" fill="#eefcfb" stroke="#5a9cc0" aria-hidden="true"><rect x=".5" y=".5" width="13" height="12" rx="2" /><rect x="4.500" y="4.500" width="14" height="12" rx="2" /><path d="M11.500 7v7M8 10.500h7" /></svg>
        <Trash2 size={20} color="#5a94c8" strokeWidth={1.5} />
        <Caret />
      </Row>
    </HeadRight>
  </BrowserHead>
);

const BrowserPage = () => (
  <BrowserBody>
    <Rail>
      <RailStar aria-label="Favourites"><FaStar size={19} color="#fff" /></RailStar>
      <Settings size={19} color="#dff2e2" />
    </Rail>
    <WebPage>
      <PageStrip><RedMark>E</RedMark></PageStrip>
      <PageBody>
        <HelpFlag>
          <HelpText>
            {[..."此经验有帮助？"].map((char) => <span key={char}>{char}</span>)}
          </HelpText>
          <HelpVote aria-label="Helpful, 419 votes"><FaThumbsUp size={23} />419</HelpVote>
          <HelpEnd />
        </HelpFlag>
        <GreenDots><GreenDot /><GreenDot /></GreenDots>
        <ArticleSide><ArticlePhoto /></ArticleSide>
        <ShareColumn>
          <ShareButton $light aria-label="Share">
            <svg width="28" height="28" fill="#fff"><path d="M0 1l9 3-2 2 5 7-3 2-5-7-3 2zM27 1l1 10-3-2-6 7-3-2 6-8-3-2z" /><circle cx="14" cy="21" r="6" /></svg>
          </ShareButton>
          <ShareButton aria-label="Collect">
            <svg width="28" height="28" fill="none" stroke="#fff" strokeWidth="2.500"><path d="M14 2l3 8.500h9l-7 5.500 3 9-8-5.500L6 25l3-9-7-5.500h9z" /></svg>
          </ShareButton>
          <ShareButton aria-label="Bookmark">
            <svg width="20" height="28" fill="none" stroke="#fff" strokeWidth="2"><rect x="2" y="1" width="16" height="26" rx="2" /><path d="M11 1h5v12l-3-3-2 3z" fill="#fff" stroke="none" /></svg>
          </ShareButton>
        </ShareColumn>
      </PageBody>
      <Suggest>
        <SuggestTitle>猜你喜欢</SuggestTitle>
        <SuggestRanks><span>1</span><span>4</span></SuggestRanks>
        <Dots />
        <SettingsLink href="#settings">设置</SettingsLink>
        <Row $pad="0 0 0 11px">
          <svg width="27" height="18" stroke="#999" aria-hidden="true"><path d="M.5 0v18" stroke="#ccc" /><path d="M11 4l10 10M21 4L11 14" /></svg>
        </Row>
      </Suggest>
    </WebPage>
    <PageScroll>
      <Triangle dir="up" color="#505050" />
      <PageThumb />
      <Triangle color="#505050" />
    </PageScroll>
  </BrowserBody>
);

const BrowserFooter = () => (
  <BrowserStatus>
    <Row $gap={20}>
      <StatusLink $dark href="#sale"><Gift size={15} color="#e89a80" fill="#fdeae2" />今日特卖</StatusLink>
      <StatusLink href="#like"><LiveDot />猜你喜欢</StatusLink>
    </Row>
    <Row $gap={15}>
      <StatusLink $dark href="#live">
        <svg width="15" height="15" fill="none" stroke="#18a04c"><circle cx="7.500" cy="7.500" r="7" /><path d="M6 4.500l4 3-4 3z" /></svg>今日直播
      </StatusLink>
      <StatusLink $before={4} href="#screen"><PhoneIcon />跨屏浏览</StatusLink>
      <StatusLink href="#doctor">
        <svg width="14" height="14"><circle cx="7" cy="7" r="6.500" fill="#eef" stroke="#a9b8d4" /><path d="M7 4v6M4 7h6" stroke="#d02030" strokeWidth="2" /></svg>医生
      </StatusLink>
      <StatusLink href="#speed"><Rocket size={13} color="#4c7a60" />加速器</StatusLink>
      <StatusLink href="#downloads">
        <svg width="13" height="14"><path d="M4 0h5v7h4l-6.500 7L0 7h4z" fill="#4aa81c" /></svg>下载
      </StatusLink>
      <svg width="13" height="12" fill="none" stroke="#4c6a58" aria-hidden="true"><path d="M.5 12V.5h5l1 1h5v5h-5l-1-1h-5" /></svg>
      <svg width="16" height="15" fill="none" aria-hidden="true"><path d="M3 8h10q0-5-5-5T3 8q0 5 5 5 3 0 4-2" stroke="#1f8ade" strokeWidth="3" /><path d="M1 14Q0 6 15 1" stroke="#f0b020" strokeWidth="2" /></svg>
      <svg width="16" height="14" aria-hidden="true" stroke="#6a88b4"><rect x="4.500" y=".5" width="11" height="9" fill="#dde8f8" /><rect x=".5" y="3.500" width="12" height="9" fill="#a9c4ee" /></svg>
      <SpeakerIcon color="#7f94a4" />
      <StatusLink href="#zoom"><Search size={15} color="#6f9cb8" />100%</StatusLink>
    </Row>
  </BrowserStatus>
);

const SystemTaskbar = () => (
  <Taskbar>
    <Orb aria-label="Start"><WinFlag /></Orb>
    <CloverIcon />
    <Grip $before={19} />
    <TaskButton $before={10} aria-label="Browser"><BrowserE /></TaskButton>
    <TaskButton $bare $before={4} aria-label="Snipping tool"><SnipIcon /></TaskButton>
    <TaskButton $width={54} $before={4} $stacked aria-label="Photos"><PhotoIcon /></TaskButton>
    <TaskButton $before={7} $width={59} aria-label="Music"><MusicIcon /></TaskButton>
    <TaskButton $before={4} $width={54} $active $stacked aria-label="Engine tool"><BlueCIcon /></TaskButton>
    <Tray>
      <Grip />
      <TrayLang>CH</TrayLang>
      <SogouIcon />
      <svg width="15" height="15" aria-hidden="true"><circle cx="7.500" cy="7.500" r="7" fill="#1a3cc0" stroke="#cdd8ff" /><text x="7.500" y="12" textAnchor="middle" fontSize="12" fontWeight="700" fill="#fff">?</text></svg>
      <svg width="20" height="18" fill="none" stroke="#fff" aria-hidden="true"><path d="M9.500 2.500v-2h6v4h-2M6.500 2.500h6v4h-6z" /><path d="M7 14h7l-3.500 3z" fill="#fff" stroke="none" /></svg>
      <Wifi size={20} strokeWidth={3} />
      <Triangle dir="up" color="#fff" />
      <svg width="16" height="16" aria-hidden="true"><path d="M2 15q-2-6 2-8 0-7 5-6 4 0 3 6 3 3 2 8z" fill="#222" /><path d="M4 8h8v3H4z" fill="#d22" /><circle cx="8" cy="5" r="2" fill="#fff" /><circle cx="11" cy="12" r="4" fill="#f2a02c" /><path d="M9 12h4" stroke="#fff" /></svg>
      <SpeakerIcon />
      <FaWindows size={15} />
      <svg width="15" height="15" fill="none" stroke="#fff" aria-hidden="true"><path d="M6 4.500h8.500v7H6M8 14.500h5M.5 1v5h4V1M2.500 6v8H6" /></svg>
      <svg width="14" height="15" fill="none" stroke="#fff" aria-hidden="true"><path d="M7 3.500H1.500v10h6V12M4 1v2" /><path d="M8 5h5v3q-2 4-5 0zM9 2v3M12 2v3M10.500 10v3" fill="#fff" /></svg>
      <Clock>22:21<br />2016-4-18</Clock>
      <ShowDesktop aria-label="Show desktop" />
    </Tray>
  </Taskbar>
);

const TestEnvironment = () => (
  <Group>
    <GroupTitle>Test Environment</GroupTitle>
    <EnvFields>
      <Labelled>Air Pressure <BoltIcon /><TextBox $flat $width={80} disabled />bar</Labelled>
      <Labelled>Temperature <TextBox $flat $width={80} disabled />°C</Labelled>
      <Labelled>Absolute Humidity <TextBox $flat $width={80} disabled />kg/m^3</Labelled>
    </EnvFields>
  </Group>
);

const ApproximationSettings = () => (
  <Group>
    <GroupTitle>Approximation Settings</GroupTitle>
    <ApproxFields>
      <Labelled>x-grid<TextBox $number $width={56} defaultValue="30" /></Labelled>
      <Spacer $grow={19} />
      <Labelled>y-grid<TextBox $number $width={56} defaultValue="30" /></Labelled>
      <Spacer $grow={15} />
      <Labelled>Approximation Method<DropDown value="Standard" width={78} /></Labelled>
      <Spacer $grow={38} />
      <Labelled><CheckBox type="checkbox" defaultChecked />&nbsp;Triangulation</Labelled>
      <Spacer $grow={19} />
      <Labelled>Extrapolation<DropDown value="Linear with Zero Limit" width={149} /></Labelled>
    </ApproxFields>
  </Group>
);

const DataTable = () => (
  <TableColumn>
    <TableBox>
      <TableWrap>
        <Table>
          <thead>
            <tr>
              <HeadCell $width={119}><HeadInner><Triangle dir="up" />a</HeadInner></HeadCell>
              <HeadCell $width={120}>b</HeadCell>
              <HeadCell>c</HeadCell>
            </tr>
          </thead>
          <tbody>
            {ROWS.map((row, i) => (
              <BodyRow key={i} $selected={i === 0} $odd={i % 2 === 1}>
                {row.map((value, j) => <Cell key={j}>{value}</Cell>)}
              </BodyRow>
            ))}
          </tbody>
        </Table>
      </TableWrap>
      <ScrollColumn>
        <ScrollUp $height={16} aria-label="Scroll table up"><Triangle dir="up" /></ScrollUp>
        <ScrollThumb $height={27} />
      </ScrollColumn>
    </TableBox>
    <TableTools>
      <ToolButton $first><UpdateIcon />update</ToolButton>
      <ToolButton aria-label="Copy"><CopyIcon /></ToolButton>
      <ToolButton aria-label="Cut"><CutIcon /></ToolButton>
      <ToolButton aria-label="Paste"><PasteIcon /></ToolButton>
    </TableTools>
  </TableColumn>
);

const EngineWindow = () => (
  <Window>
    <TitleBar>
      <TitleIcon><svg width="8" height="11"><path d="M1 0v9l2-2 2 4 2-1-2-3h3z" /></svg></TitleIcon>
      <WindowTitle>Engine - 6 cylinder engine</WindowTitle>
      <CaptionButtons>
        <CaptionButton aria-label="Minimise"><svg width="13" height="5"><rect x=".5" y=".5" width="12" height="4" fill="#fff" stroke="#444" /></svg></CaptionButton>
        <CaptionButton aria-label="Maximise"><svg width="12" height="9"><rect x=".5" y=".5" width="11" height="8" fill="#fff" stroke="#444" /><rect x="3.500" y="2.500" width="5" height="3" fill="#999" stroke="#444" /></svg></CaptionButton>
        <CaptionButton $close aria-label="Close"><svg width="12" height="10"><path d="M1 1l10 8M11 1L1 9" stroke="#533" strokeWidth="4" /><path d="M1 1l10 8M11 1L1 9" stroke="#fff" strokeWidth="2" /></svg></CaptionButton>
      </CaptionButtons>
    </TitleBar>
    <Client>
      <Sheet>
        <BlueStrip />
        <SheetBody>
          <Heading $sunken><HandleIcon />Engine Maps Basic</Heading>
          <Pane>
            <TestEnvironment />
            <MapTabs>
              <MapTabRow $back>
                <MapTab $back>HC Emission Map</MapTab>
                <MapTab $back>Soot Emission Map</MapTab>
                <MapTab $back $dim>Air-Fuel Equivalence Ratio Map</MapTab>
              </MapTabRow>
              <MapTabRow>
                <MapTab $active>Fuel Consumption Maps</MapTab>
                <MapTab>NOx Emission Map</MapTab>
                <MapTab>CO Emission Map</MapTab>
              </MapTabRow>
            </MapTabs>
            <MapPage>
              <Heading><HandleIcon />Fuel Consumption Map</Heading>
              <MapFrame>
                <CommentField>Comment<TextBox defaultValue="Manual FWD" /></CommentField>
                <Rule $margin="5px 0 6px" />
                <AxisFields>
                  <AxisLabel>a =</AxisLabel>
                  <ReadOnly>Speed</ReadOnly>
                  <ReadOnly>&lt;1/min&gt;</ReadOnly>
                  <AxisLabel>b =</AxisLabel>
                  <ReadOnly>BMEP</ReadOnly>
                  <DropDown value="<bar>" label="Unit of b" />
                  <UnitCell><UnitButton aria-label="Convert b"><UnitIcon /></UnitButton>c =</UnitCell>
                  <ReadOnly>Volume Flow</ReadOnly>
                  <ReadOnly>&lt;l/h&gt;</ReadOnly>
                  <UnitButton $end aria-label="Convert c"><UnitIcon /></UnitButton>
                </AxisFields>
                <Rule $margin="5px 0 7px" />
                <ApproximationSettings />
                <Rule $margin="4px 0 30px" />
                <DataArea>
                  <ChartPane><Chart /></ChartPane>
                  <DataTable />
                </DataArea>
                <ViewTabs>
                  <ViewTab $width={147} $indent={8}><MapIcon />&nbsp;Approximated Map</ViewTab>
                  <ViewTab $width={168} $indent={6}><IsolineIcon />&nbsp;Create Isoline Diagram</ViewTab>
                  <ViewTab $width={104}><MatrixIcon />Matrix Editor</ViewTab>
                </ViewTabs>
              </MapFrame>
            </MapPage>
          </Pane>
        </SheetBody>
        <ScrollColumn>
          <ScrollUp $height={18} aria-label="Scroll up"><Triangle dir="up" /></ScrollUp>
          <ScrollThumb $height={314} />
        </ScrollColumn>
      </Sheet>
      <SheetEdgesRight />
      <SheetEdgesBottom />
      <PageTabs>
        {PAGE_TABS.map((tab) => (
          <PageTab key={tab.text} $dim={tab.dim} $shift={tab.shift || 0} $shade={tab.shade || "#dcdcdc"}>
            {tab.text}
          </PageTab>
        ))}
      </PageTabs>
      <WindowFoot>
        <FootButton $left $width={109}><PropertiesIcon />properties...</FootButton>
        <FootButton $width={100} aria-label="Accept"><svg width="88" height="12" fill="none" stroke="#1478b4" strokeWidth="2"><path d="M76 6l3 3 5-8" /></svg></FootButton>
        <FootButton $width={29} aria-label="Undo"><UndoIcon /></FootButton>
        <FootButton $width={100}><CrossIcon />cancel</FootButton>
      </WindowFoot>
    </Client>
  </Window>
);

const App = () => (
  <>
    <GlobalStyle />
    <Desktop>
      <BrowserHeader />
      <BrowserPage />
      <BrowserFooter />
      <SystemTaskbar />

      <EngineWindow />
      <PopupMenu label="Table" items={MENU} x={728} y={470} width={154} />
      <PopupMenu label="Insert from clipboard" items={SUBMENU} x={878} y={576} width={166} />

      <ImeBar>
        <ImeLogo><SogouIcon size={27} /></ImeLogo>
        <ImeTools>
          <span>中</span>
          <FaMoon size={13} />
          <svg width="12" height="11"><circle cx="2.500" cy="3" r="1.500" fill="none" stroke="#1c6fc4" /><path d="M8 5h3v3q0 2-3 3 1-2 0-3z" fill="#1c6fc4" /></svg>
          <Keyboard size={18} />
          <svg width="16" height="15" fill="#b3bdd4"><circle cx="6" cy="3" r="3" /><path d="M0 13q0-6 6-6 3 0 4 2v4z" /><path d="M8.500 9.500h7v5h-7z" stroke="#b3bdd4" fill="#fff" /></svg>
          <FaTshirt size={15} />
          <FaWrench size={14} />
        </ImeTools>
      </ImeBar>

      <Watermark>
        中国汽车工程师之家
        <WatermarkUrl>www.cartech8.com.</WatermarkUrl>
      </Watermark>
    </Desktop>
  </>
);

export default App;
